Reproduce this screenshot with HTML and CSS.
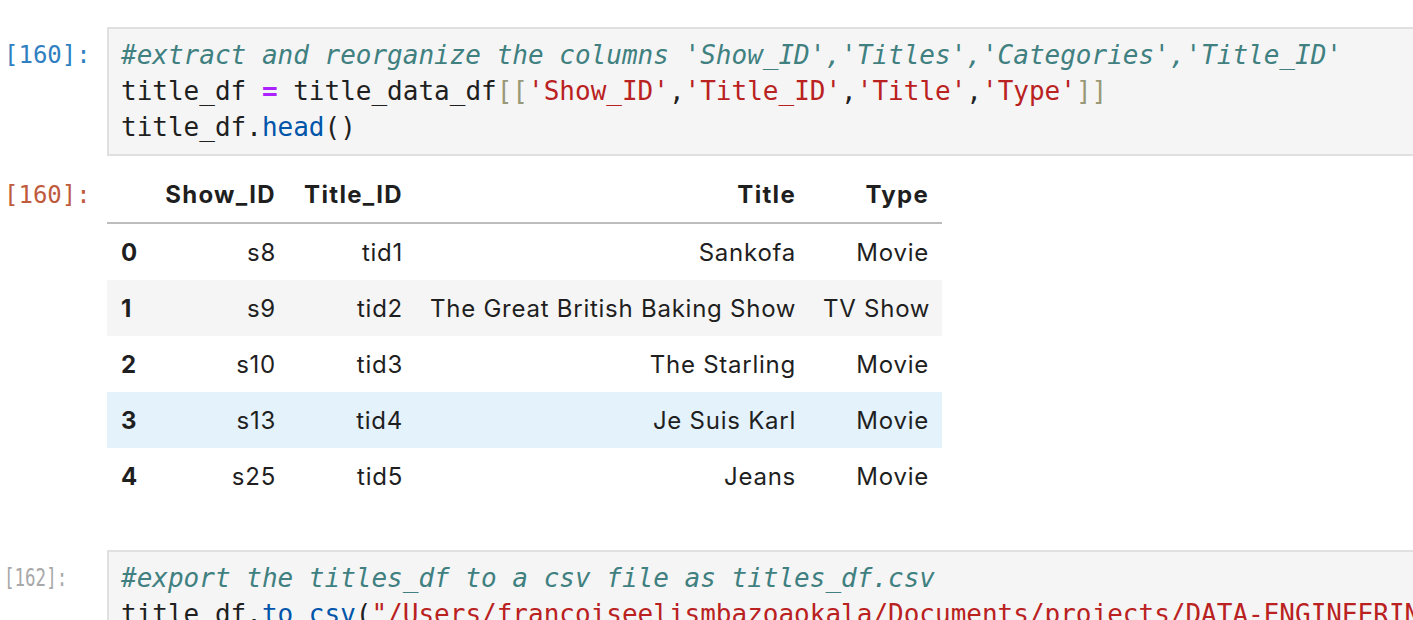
FILE: index.html
```html
<!DOCTYPE html>
<html lang="en">
<head>
<meta charset="utf-8">
<title>Notebook</title>
<link rel="stylesheet" href="styles.css">
</head>
<body>
<div class="notebook">
  <div class="cell">
    <div class="prompt prompt-in">[160]:</div>
    <div class="editor"><pre class="code"><span class="cm">#extract and reorganize the columns 'Show_ID','Titles','Categories','Title_ID'</span>
title_df <span class="op">=</span> title_data_df<span class="br">[[</span><span class="str">'Show_ID'</span>,<span class="str">'Title_ID'</span>,<span class="str">'Title'</span>,<span class="str">'Type'</span><span class="br">]]</span>
title_df.<span class="prop">head</span>()</pre></div>
  </div>

  <div class="output">
    <div class="prompt prompt-out">[160]:</div>
    <div class="output-body">
      <table class="df">
        <colgroup>
          <col class="c0"><col class="c1"><col class="c2"><col class="c3"><col class="c4">
        </colgroup>
        <thead>
          <tr><th></th><th>Show_ID</th><th>Title_ID</th><th>Title</th><th>Type</th></tr>
        </thead>
        <tbody>
          <tr><th>0</th><td>s8</td><td>tid1</td><td>Sankofa</td><td>Movie</td></tr>
          <tr class="odd"><th>1</th><td>s9</td><td>tid2</td><td>The Great British Baking Show</td><td>TV Show</td></tr>
          <tr><th>2</th><td>s10</td><td>tid3</td><td>The Starling</td><td>Movie</td></tr>
          <tr class="hover"><th>3</th><td>s13</td><td>tid4</td><td>Je Suis Karl</td><td>Movie</td></tr>
          <tr><th>4</th><td>s25</td><td>tid5</td><td>Jeans</td><td>Movie</td></tr>
        </tbody>
      </table>
    </div>
  </div>

  <div class="cell cell-last">
    <div class="prompt prompt-idle"><span class="narrow">[162]:</span></div>
    <div class="editor"><pre class="code"><span class="cm">#export the titles_df to a csv file as titles_df.csv</span>
title_df.<span class="prop">to_csv</span>(<span class="str">"/Users/francoiseelismbazoaokala/Documents/projects/DATA-ENGINEERING/netflix/titles_df.csv"</span>)</pre></div>
  </div>
</div>
</body>
</html>
```

FILE: styles.css
```css
html, body {
  margin: 0;
  padding: 0;
  background: #ffffff;
  overflow: hidden;
}

.notebook {
  padding-top: 27px;
  width: 1700px;
}

.cell,
.output {
  display: grid;
  grid-template-columns: 107px 1fr;
}

.prompt {
  font-family: "DejaVu Sans Mono", monospace;
  font-size: 24px;
  line-height: 36px;
  padding-left: 4px;
  white-space: nowrap;
}

.prompt-in {
  color: #307fc1;
  padding-top: 10px;
}

.prompt-out {
  color: #bf5b3d;
  padding-top: 1px;
  line-height: 56px;
}

.prompt-idle {
  color: #a8a8a8;
  padding-top: 10px;
}

.narrow {
  display: inline-block;
  font-size: 25px;
  transform: scaleX(0.7);
  transform-origin: left center;
}

.editor {
  background: #f5f5f5;
  border: 2px solid #e0e0e0;
  padding: 8px 12px 9px 12px;
}

.code {
  margin: 0;
  font-family: "DejaVu Sans Mono", monospace;
  font-size: 26px;
  line-height: 36px;
  color: #1f1f1f;
  white-space: pre;
}

.cm { color: #408080; font-style: italic; }
.op { color: #aa22ff; font-weight: bold; }
.str { color: #ba2121; }
.br { color: #999977; }
.prop { color: #0055aa; }

.output {
  margin-top: 10px;
}

.output-body {
  padding-bottom: 46px;
}

.df {
  border-collapse: separate;
  border-spacing: 0;
  table-layout: fixed;
  width: 835px;
  font-family: "Inter", "Helvetica Neue", Arial, sans-serif;
  font-size: 24px;
  letter-spacing: 0.75px;
  color: #1f1f1f;
}

.c0 { width: 44px; }
.c1 { width: 138px; }
.c2 { width: 127px; }
.c3 { width: 393px; }
.c4 { width: 133px; }

.df th,
.df td {
  height: 54px;
  padding: 2px 13px 0 14px;
  line-height: 54px;
  text-align: right;
  white-space: nowrap;
  vertical-align: middle;
}

.df thead th {
  font-weight: 700;
  letter-spacing: 1.3px;
  border-bottom: 2px solid #bdbdbd;
}

.df tbody th {
  font-weight: 700;
  text-align: left;
}

.df td {
  font-weight: 400;
}

.df tr.odd { background: #f5f5f5; }
.df tr.hover { background: #e4f2fb; }

.cell-last .editor {
  padding-bottom: 40px;
}
```
